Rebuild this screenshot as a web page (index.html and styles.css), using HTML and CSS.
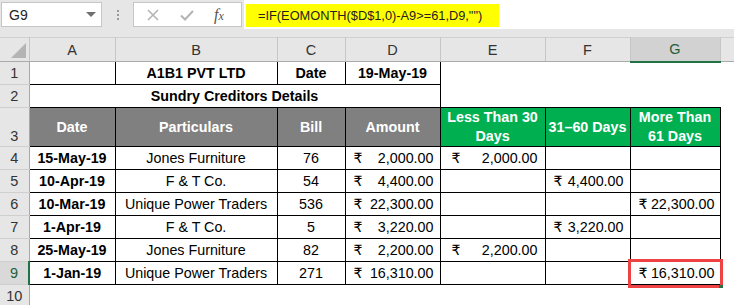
FILE: index.html
```html
<!DOCTYPE html>
<html>
<head>
<meta charset="utf-8">
<link rel="stylesheet" href="styles.css">
</head>
<body>
<div class="toolbar">
  <div class="namebox"><span class="nb-text">G9</span><span class="nb-arrow"></span></div>
  <div class="grip"><i></i><i></i><i></i></div>
  <div class="fxbox">
    <svg class="ic" width="16" height="16" viewBox="0 0 16 16"><path d="M3 3 L13 13 M13 3 L3 13" stroke="#b4b4b4" stroke-width="1.6" fill="none"/></svg>
    <svg class="ic" width="16" height="16" viewBox="0 0 16 16"><path d="M2 8.5 L6 12.5 L14 4" stroke="#b4b4b4" stroke-width="2" fill="none"/></svg>
    <span class="fx">f<span class="fxs">x</span></span>
  </div>
  <div class="formula"><div class="mark">=IF(EOMONTH($D$1,0)-A9&gt;=61,D9,"")</div></div>
</div>
<table class="sheet">
  <colgroup>
    <col class="c-rh"><col class="c-a"><col class="c-b"><col class="c-c"><col class="c-d"><col class="c-e"><col class="c-f"><col class="c-g"><col class="c-h">
  </colgroup>
  <tr class="r-head">
    <td class="corner"><span class="tri"></span></td>
    <td class="ch">A</td><td class="ch">B</td><td class="ch">C</td><td class="ch">D</td><td class="ch">E</td><td class="ch">F</td><td class="ch ch-sel">G</td><td class="ch ch-last"></td>
  </tr>
  <tr class="r">
    <td class="rh">1</td>
    <td class="bd"></td><td class="bd bold ctr">A1B1 PVT LTD</td><td class="bd bold ctr">Date</td><td class="bd bold ctr">19-May-19</td>
    <td></td><td></td><td></td><td></td>
  </tr>
  <tr class="r">
    <td class="rh">2</td>
    <td class="bd bold ctr" colspan="4">Sundry Creditors Details</td>
    <td></td><td></td><td></td><td></td>
  </tr>
  <tr class="r3">
    <td class="rh rh-bottom">3</td>
    <td class="bd hd gray">Date</td><td class="bd hd gray">Particulars</td><td class="bd hd gray">Bill</td><td class="bd hd gray">Amount</td>
    <td class="bd hd green">Less Than 30 Days</td><td class="bd hd green">31–60 Days</td><td class="bd hd green">More Than 61 Days</td>
    <td></td>
  </tr>
  <tr class="r">
    <td class="rh">4</td>
    <td class="bd bold ctr">15-May-19</td><td class="bd ctr">Jones Furniture</td><td class="bd ctr">76</td>
    <td class="bd acc"><div class="av"><span class="cur">₹</span><span>2,000.00</span></div></td>
    <td class="bd acc acc-e"><div class="av"><span class="cur">₹</span><span>2,000.00</span></div></td>
    <td class="bd"></td><td class="bd"></td><td></td>
  </tr>
  <tr class="r">
    <td class="rh">5</td>
    <td class="bd bold ctr">10-Apr-19</td><td class="bd ctr">F &amp; T Co.</td><td class="bd ctr">54</td>
    <td class="bd acc"><div class="av"><span class="cur">₹</span><span>4,400.00</span></div></td>
    <td class="bd"></td>
    <td class="bd acc"><div class="av"><span class="cur">₹</span><span>4,400.00</span></div></td>
    <td class="bd"></td><td></td>
  </tr>
  <tr class="r">
    <td class="rh">6</td>
    <td class="bd bold ctr">10-Mar-19</td><td class="bd ctr">Unique Power Traders</td><td class="bd ctr">536</td>
    <td class="bd acc"><div class="av"><span class="cur">₹</span><span>22,300.00</span></div></td>
    <td class="bd"></td><td class="bd"></td>
    <td class="bd acc acc-g"><div class="av"><span class="cur">₹</span><span>22,300.00</span></div></td>
    <td></td>
  </tr>
  <tr class="r">
    <td class="rh">7</td>
    <td class="bd bold ctr">1-Apr-19</td><td class="bd ctr">F &amp; T Co.</td><td class="bd ctr">5</td>
    <td class="bd acc"><div class="av"><span class="cur">₹</span><span>3,220.00</span></div></td>
    <td class="bd"></td>
    <td class="bd acc"><div class="av"><span class="cur">₹</span><span>3,220.00</span></div></td>
    <td class="bd"></td><td></td>
  </tr>
  <tr class="r">
    <td class="rh">8</td>
    <td class="bd bold ctr">25-May-19</td><td class="bd ctr">Jones Furniture</td><td class="bd ctr">82</td>
    <td class="bd acc"><div class="av"><span class="cur">₹</span><span>2,200.00</span></div></td>
    <td class="bd acc acc-e"><div class="av"><span class="cur">₹</span><span>2,200.00</span></div></td>
    <td class="bd"></td><td class="bd"></td><td></td>
  </tr>
  <tr class="r">
    <td class="rh rh-sel">9</td>
    <td class="bd bold ctr">1-Jan-19</td><td class="bd ctr">Unique Power Traders</td><td class="bd ctr">271</td>
    <td class="bd acc"><div class="av"><span class="cur">₹</span><span>16,310.00</span></div></td>
    <td class="bd"></td><td class="bd"></td>
    <td class="bd acc acc-g g9"><div class="av"><span class="cur">₹</span><span>16,310.00</span></div><div class="hl"></div><div class="handle"></div></td>
    <td></td>
  </tr>
  <tr class="r">
    <td class="rh">10</td>
    <td></td><td></td><td></td><td></td><td></td><td></td><td></td><td></td>
  </tr>
</table>
</body>
</html>
```

FILE: styles.css
```css
html, body {
  margin: 0;
  padding: 0;
  background: #ffffff;
}
body {
  width: 734px;
  height: 305px;
  overflow: hidden;
  font-family: "Liberation Sans", Arial, sans-serif;
}

/* ---------- formula bar ---------- */
.toolbar {
  display: flex;
  align-items: flex-start;
  height: 37px;
  box-sizing: border-box;
  padding-top: 2px;
  background: #e6e6e6;
}
.namebox {
  margin-left: 1px;
  width: 101px;
  height: 25px;
  box-sizing: border-box;
  border: 1px solid #c6c6c6;
  background: #ffffff;
  display: flex;
  align-items: center;
  justify-content: space-between;
  padding: 0 5px 0 7px;
}
.nb-text {
  font-size: 14px;
  color: #222;
}
.nb-arrow {
  width: 0;
  height: 0;
  border-left: 5px solid transparent;
  border-right: 5px solid transparent;
  border-top: 5px solid #6f6f6f;
}
.grip {
  width: 31px;
  height: 25px;
  display: flex;
  flex-direction: column;
  align-items: center;
  justify-content: center;
  gap: 2px;
}
.grip i {
  display: block;
  width: 2px;
  height: 2px;
  background: #9a9a9a;
}
.fxbox {
  width: 109px;
  height: 25px;
  box-sizing: border-box;
  border: 1px solid #c6c6c6;
  background: #ffffff;
  display: flex;
  align-items: center;
  padding-left: 11px;
  gap: 18px;
}
.fx {
  font-family: "Liberation Serif", "Times New Roman", serif;
  font-style: italic;
  font-size: 16px;
  color: #555;
  margin-left: 1px;
}
.fxs {
  font-size: 12px;
}
.formula {
  flex: 1;
  margin-left: 2px;
  margin-top: -2px;
  height: 29px;
  box-sizing: border-box;
  background: #ffffff;
  padding: 4px 0 0 2px;
}
.mark {
  width: 253px;
  height: 23px;
  box-sizing: border-box;
  background: #ffff00;
  padding-left: 12px;
  line-height: 23px;
  font-size: 12.8px;
  white-space: nowrap;
  color: #222;
}

/* ---------- sheet ---------- */
.sheet {
  border-collapse: collapse;
  table-layout: fixed;
  width: 734px;
  font-size: 14.3px;
  color: #000;
}
.c-rh { width: 29px; }
.c-a { width: 86px; }
.c-b { width: 162px; }
.c-c { width: 68px; }
.c-d { width: 95px; }
.c-e { width: 105px; }
.c-f { width: 85px; }
.c-g { width: 90px; }
.c-h { width: 14px; }

.sheet td {
  padding: 0;
  white-space: nowrap;
  overflow: visible;
}
.r-head { height: 24px; }
.r { height: 23px; }
.r3 { height: 39px; }

.corner {
  background: #e6e6e6;
  border-top: 1px solid #d0d0d0;
  border-right: 1px solid #c6c6c6;
  border-bottom: 1px solid #ababab;
  text-align: right;
  vertical-align: bottom;
  padding: 0 3px 3px 0 !important;
  line-height: 0;
}
.tri {
  display: inline-block;
  width: 0;
  height: 0;
  border-left: 15px solid transparent;
  border-bottom: 15px solid #b4b4b4;
}
.ch {
  background: #e6e6e6;
  border-top: 1px solid #d0d0d0;
  border-right: 1px solid #c6c6c6;
  border-bottom: 1px solid #ababab;
  text-align: center;
  font-size: 14.5px;
  color: #333;
}
.ch-sel {
  background: #d2d2d2;
  border-bottom: 2px solid #217346;
  color: #1e5e3a;
}
.ch-last {
  border-right: none;
}
.rh {
  background: #e6e6e6;
  border-bottom: 1px solid #cfcfcf;
  border-right: 1px solid #a8a8a8;
  text-align: center;
  vertical-align: middle;
  font-size: 14.5px;
  color: #333;
}
.rh-bottom {
  vertical-align: bottom;
  padding-bottom: 2px !important;
}
.rh-sel {
  background: #d9d9d9;
  border-right: 2px solid #217346;
  color: #1e5e3a;
}

.bd {
  border: 1px solid #000;
}
.bold { font-weight: bold; }
.ctr { text-align: center; }

.hd {
  color: #ffffff;
  font-weight: bold;
  text-align: center;
  white-space: normal !important;
  line-height: 19px;
}
.gray { background: #808080; }
.green { background: #00b050; }

.acc .av {
  display: flex;
  align-items: baseline;
  justify-content: space-between;
  padding: 0 6px 0 8px;
}
.acc-e .av {
  padding: 0 7px 0 11px;
}
.acc-g .av {
  padding: 0 5px 0 8px;
}
.cur {
  font-family: "DejaVu Sans", "Noto Sans", sans-serif;
  font-size: 14px;
}

.g9 {
  position: relative;
}
.hl {
  position: absolute;
  left: -3px;
  top: -3px;
  right: -3px;
  bottom: -4px;
  border: 3px solid #ef4343;
}
.handle {
  position: absolute;
  right: -3px;
  bottom: -4px;
  width: 4px;
  height: 3px;
  background: #217346;
}
```
